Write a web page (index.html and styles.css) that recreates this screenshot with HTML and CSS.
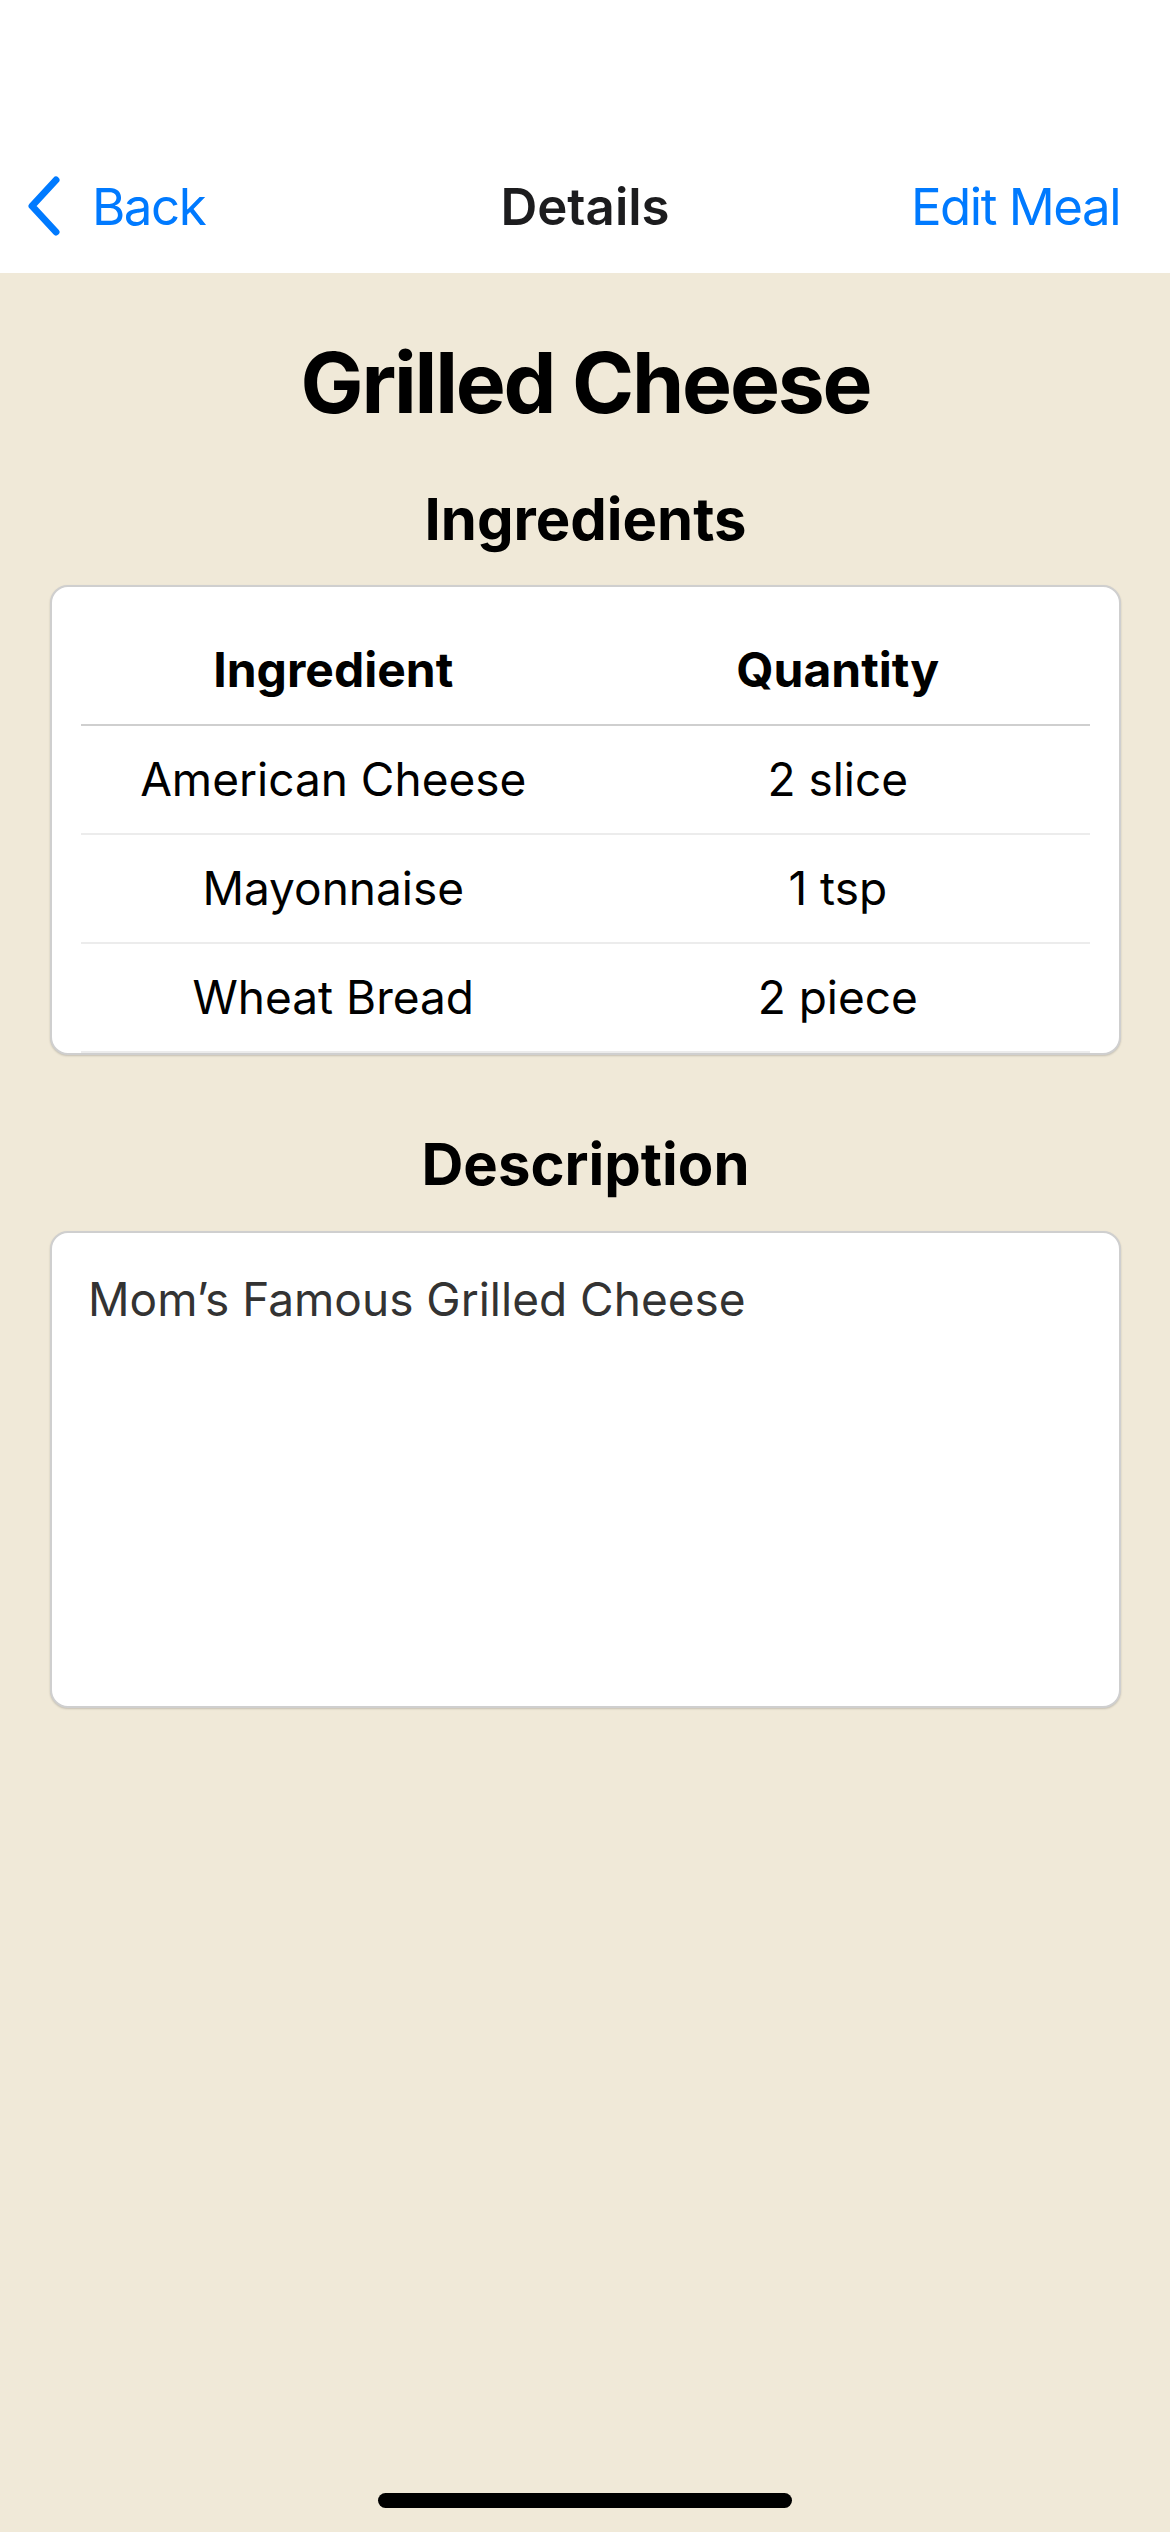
FILE: index.html
```html
<!DOCTYPE html>
<html lang="en">
<head>
<meta charset="utf-8">
<title>Details</title>
<link rel="stylesheet" href="styles.css">
</head>
<body>
<div class="screen">
  <header class="nav">
    <div class="nav-row">
      <a class="nav-back">
        <svg class="chevron" viewBox="0 0 36 60" width="36" height="60" aria-hidden="true">
          <path d="M30 4 L6 30 L30 56" fill="none" stroke="#007AFF" stroke-width="7" stroke-linecap="round" stroke-linejoin="round"/>
        </svg>
        <span>Back</span>
      </a>
      <div class="nav-title">Details</div>
      <a class="nav-action">Edit Meal</a>
    </div>
  </header>

  <main class="content">
    <h1 class="meal-title">Grilled Cheese</h1>
    <h2 class="section-title">Ingredients</h2>
    <div class="card ingredients-card">
      <table class="ing-table">
        <thead>
          <tr><th>Ingredient</th><th>Quantity</th></tr>
        </thead>
        <tbody>
          <tr><td>American Cheese</td><td>2 slice</td></tr>
          <tr><td>Mayonnaise</td><td>1 tsp</td></tr>
          <tr><td>Wheat Bread</td><td>2 piece</td></tr>
        </tbody>
      </table>
    </div>

    <h2 class="section-title desc-title">Description</h2>
    <div class="card desc-card">
      <p class="desc-text">Mom’s Famous Grilled Cheese</p>
    </div>
  </main>

  <div class="home-indicator"></div>
</div>
</body>
</html>
```

FILE: styles.css
```css
html, body {
  margin: 0;
  padding: 0;
  background: #F0E9D8;
}

body {
  font-family: Inter, "Noto Sans", "Liberation Sans", sans-serif;
  color: #000;
}

.screen {
  position: relative;
  min-height: 2532px;
  background: #F0E9D8;
}

/* Navigation bar */
.nav {
  background: #fff;
  height: 273px;
  box-sizing: border-box;
  padding-top: 177px;
}

.nav-row {
  position: relative;
  display: flex;
  align-items: center;
  justify-content: space-between;
  height: 60px;
  padding: 0 50px 0 26px;
  font-size: 51px;
  line-height: 60px;
}

.nav-back {
  display: flex;
  align-items: center;
  gap: 30px;
  color: #007AFF;
  letter-spacing: -1.5px;
}

.chevron {
  display: block;
  margin-top: -2px;
}

.nav-title {
  position: absolute;
  left: 0;
  right: 0;
  text-align: center;
  font-weight: 600;
  color: #1c1c1e;
  pointer-events: none;
}

.nav-action {
  color: #007AFF;
  letter-spacing: -1.5px;
}

/* Content */
.content {
  display: flex;
  flex-direction: column;
  align-items: stretch;
  padding: 60px 49px 0 50px;
}

.meal-title {
  margin: 0;
  text-align: center;
  font-size: 84px;
  line-height: 100px;
  font-weight: 700;
  letter-spacing: -2.2px;
}

.section-title {
  margin: 51px 0 31px;
  text-align: center;
  font-size: 58px;
  line-height: 70px;
  font-weight: 700;
}

.desc-title {
  margin-top: 74px;
  margin-bottom: 32px;
}

.card {
  background: #fff;
  border: 2px solid #cfcfcf;
  border-radius: 18px;
  box-shadow: 0 1px 2px rgba(0, 0, 0, 0.18);
  overflow: hidden;
}

.ingredients-card {
  padding: 29px 29px 0;
}

.ing-table {
  width: 100%;
  border-collapse: collapse;
  table-layout: fixed;
}

.ing-table th {
  height: 108px;
  padding: 0;
  font-size: 48px;
  line-height: 108px;
  font-weight: 700;
  text-align: center;
  border-bottom: 2px solid #cfcfcf;
}

.ing-table td {
  height: 107px;
  padding: 0;
  font-size: 46px;
  line-height: 107px;
  font-weight: 400;
  text-align: center;
  border-bottom: 2px solid #ececec;
}

.desc-card {
  padding: 38px 36px;
  box-sizing: border-box;
  height: 477px;
}

.desc-text {
  margin: 0;
  font-size: 46px;
  line-height: 56px;
  color: #333;
}

.home-indicator {
  position: absolute;
  left: 378px;
  bottom: 24px;
  width: 414px;
  height: 15px;
  border-radius: 8px;
  background: #000;
}
```
